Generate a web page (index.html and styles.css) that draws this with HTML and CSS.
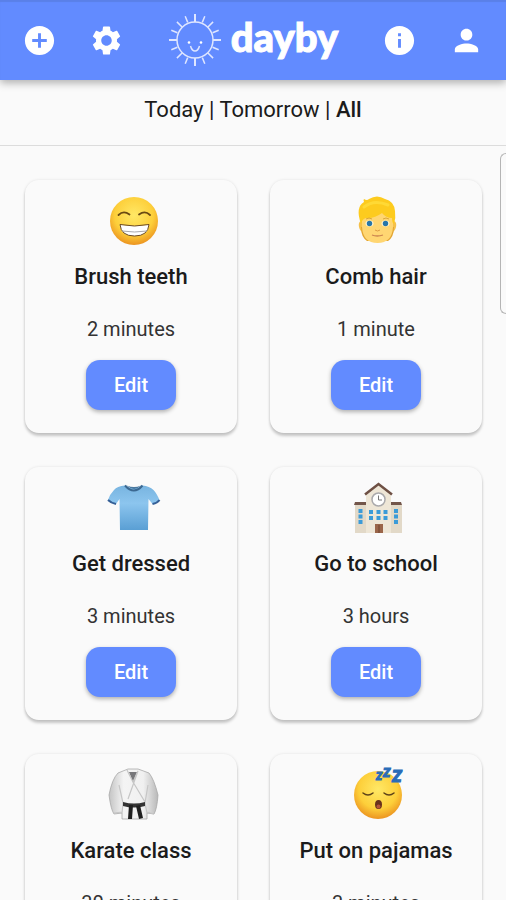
FILE: index.html
```html
<!DOCTYPE html>
<html lang="en">
<head>
  <meta charset="UTF-8">
  <meta name="viewport" content="width=device-width, initial-scale=1">
  <title>dayby</title>
  <link rel="stylesheet" href="styles.css">
</head>
<body>

  <header class="topbar">
    <div class="actions">
      <button class="icon-btn" aria-label="Add activity">
        <svg viewBox="0 0 24 24"><path d="M12 2C6.48 2 2 6.48 2 12s4.480 10 10 10 10-4.480 10-10S17.520 2 12 2zm5 11h-4v4h-2v-4H7v-2h4V7h2v4h4v2z"/></svg>
      </button>
      <button class="icon-btn" aria-label="Settings">
        <svg viewBox="0 0 24 24"><path d="M19.140 12.940c.04-.3.06-.61.06-.94 0-.32-.02-.64-.07-.94l2.030-1.580c.18-.14.23-.41.12-.61l-1.920-3.320c-.12-.22-.37-.29-.59-.22l-2.390.96c-.5-.38-1.030-.7-1.620-.94l-.36-2.540c-.04-.24-.24-.41-.48-.41h-3.840c-.24 0-.43.17-.47.41l-.36 2.540c-.59.24-1.130.57-1.620.94l-2.390-.96c-.22-.08-.47 0-.59.22L2.740 8.870c-.12.21-.08.47.12.61l2.030 1.580c-.05.3-.09.63-.09.94s.02.64.07.94l-2.030 1.580c-.18.14-.23.41-.12.61l1.920 3.320c.12.22.37.29.59.22l2.390-.96c.5.38 1.030.7 1.620.94l.36 2.540c.05.24.24.41.48.41h3.840c.24 0 .44-.17.47-.41l.36-2.540c.59-.24 1.130-.56 1.620-.94l2.390.96c.22.08.47 0 .59-.22l1.920-3.320c.12-.22.07-.47-.12-.61l-2.010-1.580zM12 15.600c-1.980 0-3.600-1.620-3.600-3.600s1.620-3.600 3.600-3.600 3.600 1.620 3.600 3.600-1.620 3.600-3.600 3.600z"/></svg>
      </button>
    </div>

    <div class="logo">
      <svg class="sun" viewBox="0 0 54 54">
        <circle cx="27" cy="27" r="18"/>
        <path class="rays" d="M27 9V1M27 45v8M9 27H1M45 27h8"/>
        <path d="M34.300 9.400l2.500-6.100M39.700 14.300l5.400-5.400M44.600 19.700l6.100-2.500M44.600 34.300l6.100 2.500M39.700 39.700l5.400 5.400M34.300 44.600l2.500 6.100M19.700 44.600l-2.500 6.100M14.300 39.700l-5.400 5.400M9.400 34.300l-6.100 2.500M9.400 19.700l-6.100-2.500M14.300 14.300L8.900 8.900M19.700 9.400l-2.500-6.100"/>
        <path d="M22.500 33q1.500 5 4.500 5t4.500-5"/>
        <circle class="dot" cx="21" cy="29.500" r="1.300"/>
        <circle class="dot" cx="33" cy="29.500" r="1.300"/>
      </svg>
      <span class="wordmark">dayby</span>
    </div>

    <div class="actions">
      <button class="icon-btn" aria-label="Info">
        <svg viewBox="0 0 24 24"><path d="M12 2C6.480 2 2 6.480 2 12s4.480 10 10 10 10-4.480 10-10S17.520 2 12 2zm1 15h-2v-6h2v6zm0-8h-2V7h2v2z"/></svg>
      </button>
      <button class="icon-btn" aria-label="Profile">
        <svg viewBox="0 0 24 24"><path d="M12 12c2.210 0 4-1.790 4-4s-1.790-4-4-4-4 1.790-4 4 1.790 4 4 4zm0 2c-2.670 0-8 1.340-8 4v2h16v-2c0-2.660-5.330-4-8-4z"/></svg>
      </button>
    </div>
  </header>

  <nav class="tabs">
    <a href="#today">Today</a> | <a href="#tomorrow">Tomorrow</a> | <a class="active" href="#all">All</a>
  </nav>

  <main class="grid">
    <section class="card">
      <svg class="emoji" viewBox="-3 0 52 52">
        <defs>
          <radialGradient id="skin" cx="50%" cy="38%" r="62%">
            <stop offset="0" stop-color="#ffe866"/>
            <stop offset=".65" stop-color="#fdcf3a"/>
            <stop offset="1" stop-color="#ec9420"/>
          </radialGradient>
        </defs>
        <circle cx="26" cy="26" r="24" fill="url(#skin)"/>
        <path d="M10.500 20q5-5 11-.5M31 19.500q6-4.500 11 .5" fill="none" stroke="#6b4a12" stroke-width="1.800" stroke-linecap="round"/>
        <path d="M12 29.500q14.500 3 29 0Q40 41 26.500 41T12 29.500z" fill="#fff" stroke="#6b4a24" stroke-width="1"/>
        <path d="M14 36q12.500 2 25 0" fill="none" stroke="#a9a9ad" stroke-width="1"/>
      </svg>
      <h2>Brush teeth</h2>
      <p>2 minutes</p>
      <button class="edit">Edit</button>
    </section>

    <section class="card">
      <svg class="emoji" viewBox="0 0 52 52">
        <path d="M11 26q-3 1-2 6t5 5h27q4 0 5-5t-2-6z" fill="#f5c04a"/>
        <path d="M11 32q0 10 6 14h21q6-4 6-14z" fill="#e3a531"/>
        <path d="M12 14h31v18q-1 16-15.500 16T12 32z" fill="#ffd672"/>
        <path d="M11 29Q5 12 14 7q-1-2 0-3 3 2 5 0 8-5 16 0 9 2 10 12 1 7-1 13-2-1-2-6-6 0-10-5-8 6-16 5-4 1-5 6z" fill="#fdcb1e"/>
        <path d="M14 12q10-8 24-2" fill="none" stroke="#ffd935" stroke-width="3" stroke-linecap="round"/>
        <ellipse cx="19.500" cy="28.500" rx="4" ry="3" fill="#fff3d0"/>
        <ellipse cx="35.500" cy="28.500" rx="4" ry="3" fill="#fff3d0"/>
        <circle cx="19.500" cy="28.500" r="2.700" fill="#2876a8"/>
        <circle cx="35.500" cy="28.500" r="2.700" fill="#2876a8"/>
        <path d="M16 24q3-2 6 0M33 24q3-2 6 0" fill="none" stroke="#d9a63a" stroke-width="1"/>
        <path d="M25 35q2.500 2 5 0" fill="none" stroke="#dd9c43" stroke-width="1"/>
        <path d="M22 40q5 2 11 0" fill="none" stroke="#cc8550" stroke-width="1.300"/>
      </svg>
      <h2>Comb hair</h2>
      <p>1 minute</p>
      <button class="edit">Edit</button>
    </section>

    <section class="card">
      <svg class="emoji" viewBox="-3 0 52 52">
        <defs>
          <linearGradient id="shirt" x1="0" y1="0" x2="0" y2="1">
            <stop offset="0" stop-color="#78b4e0"/>
            <stop offset=".4" stop-color="#8cc5ee"/>
            <stop offset="1" stop-color="#5a9fd4"/>
          </linearGradient>
        </defs>
        <path d="M17 3.500Q9 4 6 8q-4 4-6 10 3 3 8 4l3.500-5L12 48h28l.5-31 4 5q5-1 7-4-3-7-6-10-4-4-11-4.500-8 5-17.500 0z" fill="url(#shirt)"/>
        <path d="M17 3.500q9 10 17.500 0" fill="none" stroke="#3b6891" stroke-width="2"/>
        <path d="M19 3.500q7 3 14 0-7 7-14 0z" fill="#4a789f"/>
        <path d="M0 18q3 3 8 4M44.500 22q5-1 7-4" fill="none" stroke="#345f96" stroke-width="2"/>
      </svg>
      <h2>Get dressed</h2>
      <p>3 minutes</p>
      <button class="edit">Edit</button>
    </section>

    <section class="card">
      <svg class="emoji" viewBox="0 0 52 52">
        <path d="M5 23h47v28H5z" fill="#e2d9c8"/>
        <path d="M16 12L28.500 3 41 12v39H16z" fill="#eee6d6"/>
        <path d="M15 12.500L28.500 2 42 12.500" fill="none" stroke="#6e5044" stroke-width="2.500"/>
        <path d="M5 20h11v3H4zM41 20h10l1 3H41z" fill="#73564a"/>
        <circle cx="28.500" cy="17.500" r="6.500" fill="#fff" stroke="#aaa9ab" stroke-width="1.500"/>
        <path d="M28.500 13.500v4.500H32" fill="none" stroke="#777" stroke-width="1"/>
        <path d="M19 28h4v4h-4zM26.500 28h4v4h-4zM33.500 28h4v4h-4zM19 34h4v4h-4zM26.500 34h4v4h-4zM33.500 34h4v4h-4zM8.500 27h4v4h-4zM8.500 32.500h4v4h-4zM8.500 38h4v4h-4zM44 27h4v4h-4zM44 32.500h4v4h-4zM44 38h4v4h-4z" fill="#3b9bd8"/>
        <path d="M25 42h8v9h-8z" fill="#9a6549"/>
        <path d="M29 43v8" stroke="#70452f" stroke-width="1"/>
      </svg>
      <h2>Go to school</h2>
      <p>3 hours</p>
      <button class="edit">Edit</button>
    </section>

    <section class="card">
      <svg class="emoji" viewBox="-3 0 52 52">
        <defs>
          <linearGradient id="gi">
            <stop offset="0" stop-color="#c4c4c4"/>
            <stop offset=".3" stop-color="#f4f4f4"/>
            <stop offset=".7" stop-color="#f0f0f0"/>
            <stop offset="1" stop-color="#b8b8b8"/>
          </linearGradient>
        </defs>
        <path d="M20 0h10l11 4q5 6 9 22-1 14-4 19l-7-1v6H14v-6l-8 1q-3-4-5-19Q4 10 10 4z" fill="url(#gi)" stroke="#a8a8a8" stroke-width=".8"/>
        <path d="M21 3h8l-4 10z" fill="#77777a"/>
        <path d="M19 1l6 12 5-11M30 2L20 30M25 13l12 20M11 16l4 18-1 10M40 16l-3 18 2 10M6 44l8-1M39 43l7 2" fill="none" stroke="#c6c6c6" stroke-width="1.200"/>
        <path d="M15 33q11 3 22 0v4q-11 3-22 0z" fill="#343434"/>
        <path d="M21 36h4l-1 14h-4zM28 37l4-1 3 13-4 1z" fill="#202020"/>
      </svg>
      <h2>Karate class</h2>
      <p>30 minutes</p>
      <button class="edit">Edit</button>
    </section>

    <section class="card">
      <svg class="emoji" viewBox="0 0 52 52">
        <circle cx="28" cy="26" r="24" fill="url(#skin)"/>
        <path d="M13 24q5 4 10 0M34 24q5 4 10 0" fill="none" stroke="#5f4419" stroke-width="1.500" stroke-linecap="round"/>
        <ellipse cx="28.500" cy="35.500" rx="3.500" ry="4.500" fill="#69311c"/>
        <ellipse cx="28.500" cy="37.500" rx="2" ry="2" fill="#b5523b"/>
        <g class="zzz">
          <text x="26" y="11" font-size="10">Z</text>
          <text x="33" y="8" font-size="12">Z</text>
          <text x="42" y="13" font-size="16">Z</text>
        </g>
      </svg>
      <h2>Put on pajamas</h2>
      <p>3 minutes</p>
      <button class="edit">Edit</button>
    </section>
  </main>

  <div class="edge-handle"></div>

</body>
</html>
```
FILE: styles.css
```css
:root {
  --primary: #628bff;
  --bg: #fafafa;
  --text: #1b1b1b;
}

* {
  box-sizing: border-box;
  margin: 0;
  padding: 0;
}

body {
  display: flex;
  flex-direction: column;
  height: 100vh;
  overflow: hidden;
  font-family: Roboto, sans-serif;
  background: var(--bg);
  color: var(--text);
}

button {
  border: none;
  font-family: inherit;
  cursor: pointer;
}

.topbar {
  flex: none;
  display: flex;
  align-items: center;
  justify-content: space-between;
  height: 80px;
  padding: 0 22px;
  background: var(--primary);
  box-shadow: inset 0 2px 1px #5a80e8, 0 3px 8px rgba(0, 0, 0, 0.3);
}

.actions {
  display: flex;
  gap: 32px;
}

.icon-btn {
  width: 35px;
  height: 35px;
  background: none;
}

.icon-btn svg {
  display: block;
  width: 100%;
  fill: #fff;
}

.logo {
  display: flex;
  align-items: center;
  gap: 9px;
}

.sun {
  width: 54px;
  height: 54px;
  fill: none;
  stroke: #dfe6ff;
  stroke-width: 1.5;
}

.sun .rays {
  stroke-width: 2;
}

.sun .dot {
  fill: #fff;
  stroke: none;
}

.wordmark {
  padding-bottom: 6px;
  font-family: Lato, sans-serif;
  font-size: 40px;
  font-weight: 900;
  line-height: 48px;
  color: #fff;
  -webkit-text-stroke: 1px #fff;
}

.tabs {
  flex: none;
  padding: 16px 0 21px;
  border-bottom: 1px solid #dcdcdc;
  font-size: 22px;
  line-height: 28px;
  text-align: center;
}

.tabs a {
  color: inherit;
  text-decoration: none;
}

.tabs .active {
  font-weight: 500;
}

.grid {
  flex: 1;
  display: grid;
  grid-template-columns: 1fr 1fr;
  align-content: start;
  gap: 34px 33px;
  padding: 34px 24px 34px 25px;
  overflow-y: auto;
  scrollbar-width: none;
}

.card {
  display: flex;
  flex-direction: column;
  align-items: center;
  padding: 15px 0 23px;
  border-radius: 14px;
  box-shadow: 0 3px 3px rgba(0, 0, 0, 0.2), 0 0 3px rgba(0, 0, 0, 0.1);
}

.emoji {
  width: 52px;
  height: 52px;
  overflow: visible;
}

.emoji .zzz {
  font-family: Roboto, sans-serif;
  font-weight: 900;
  font-style: italic;
  fill: #2a6cb8;
  stroke: #2a6cb8;
}

.card h2 {
  margin-top: 16px;
  font-size: 22px;
  font-weight: 500;
  line-height: 28px;
}

.card p {
  margin: 26px 0 19px;
  font-size: 20px;
  line-height: 24px;
  color: #333;
}

.edit {
  width: 90px;
  height: 50px;
  border-radius: 14px;
  background: var(--primary);
  box-shadow: 0 2px 4px rgba(0, 0, 0, 0.3);
  color: #fff;
  font-size: 20px;
  font-weight: 500;
}

/* system edge panel handle, runs off the right side */
.edge-handle {
  position: absolute;
  top: 153px;
  right: 0;
  width: 6px;
  height: 161px;
  border: 1px solid #b5b5b5;
  border-right: none;
  border-radius: 6px 0 0 6px;
  background: var(--bg);
}
```
